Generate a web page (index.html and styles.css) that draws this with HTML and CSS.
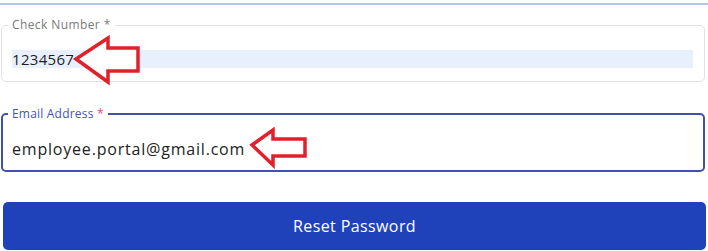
FILE: index.html
```html
<!DOCTYPE html>
<html>
<head>
<meta charset="utf-8">
<link rel="stylesheet" href="styles.css">
</head>
<body>
<div class="page">
  <div class="topline"></div>
  <fieldset class="field">
    <legend class="label">Check Number *</legend>
    <div class="value autofill">1234567</div>
  </fieldset>
  <fieldset class="field focused">
    <legend class="label">Email Address <span class="req">*</span></legend>
    <div class="value">employee.portal@gmail.com</div>
  </fieldset>
  <button class="submit">Reset Password</button>
  <svg class="arrow arrow-one" width="72" height="52" viewBox="0 0 72 52">
    <polygon points="4,24 36,3 36,13 66,13 66,36 36,36 36,47" />
  </svg>
  <svg class="arrow arrow-two" width="62" height="42" viewBox="0 0 62 42">
    <polygon points="4,18 25,3 25,12 57,12 57,29 25,29 25,38" />
  </svg>
</div>
</body>
</html>
```
FILE: styles.css
```css
html, body {
  margin: 0;
  padding: 0;
  background: #ffffff;
}
body {
  width: 708px;
  height: 251px;
  overflow: hidden;
  font-family: "Open Sans", "Liberation Sans", sans-serif;
}
.page {
  position: relative;
  display: flex;
  flex-direction: column;
}
.topline {
  height: 2px;
  margin-top: 3px;
  background: #b3c7ea;
}
.field {
  margin: 12px 3px 0 1px;
  padding: 0 10px 13px 10px;
  border: 1px solid #e2e2e2;
  border-radius: 5px;
  min-width: 0;
}
.field.focused {
  margin-top: 24px;
  border: 2px solid #3f51a8;
  padding: 0 9px 11px 9px;
}
.label {
  margin-left: -4px;
  padding: 0 4px;
  font-size: 12px;
  line-height: 16px;
  letter-spacing: 0.4px;
  color: #7a7a7a;
}
.focused .label {
  color: #4456ae;
  letter-spacing: 0.2px;
}
.req {
  color: #e5487a;
}
.value {
  font-size: 15px;
  line-height: 18px;
  letter-spacing: 0.3px;
  color: #1e1e1e;
  margin-top: 17px;
}
.autofill {
  background: #e8f0fe;
  margin-right: 1px;
}
.focused .value {
  font-size: 16px;
  margin-top: 17px;
  line-height: 20px;
  letter-spacing: 0.8px;
  color: #222222;
}
.submit {
  margin: 30px 2px 0 3px;
  height: 48px;
  border: none;
  border-radius: 5px;
  background: #1f42bb;
  color: #ffffff;
  font-family: "Open Sans", "Liberation Sans", sans-serif;
  font-size: 16px;
  letter-spacing: 0.4px;
}
.arrow {
  position: absolute;
}
.arrow polygon {
  fill: #ffffff;
  stroke: #e0202a;
  stroke-width: 3.5;
  stroke-linejoin: miter;
}
.arrow-one {
  left: 72px;
  top: 35px;
}
.arrow-two {
  left: 248px;
  top: 127px;
}
```
